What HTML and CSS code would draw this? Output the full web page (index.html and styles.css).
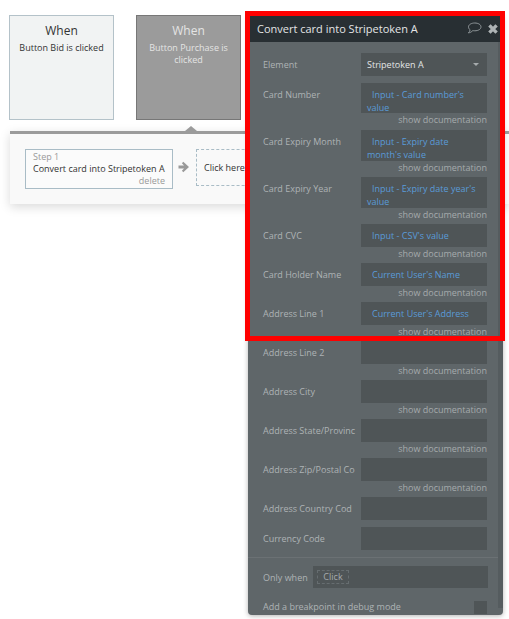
FILE: index.html
```html
<!DOCTYPE html>
<html lang="en">
<head>
    <meta charset="UTF-8">
    <meta name="viewport" content="width=device-width, initial-scale=1.0">
    <title>Workflow editor</title>
    <link rel="stylesheet" href="styles.css">
</head>
<body>
    <div class="when-row">
        <div class="when-card">
            <div class="when-title">When</div>
            <div class="when-text">Button Bid is clicked</div>
        </div>
        <div class="when-card selected">
            <div class="when-title">When</div>
            <div class="when-text">Button Purchase is clicked</div>
        </div>
    </div>

    <div class="step-panel">
        <span class="step-notch"></span>
        <div class="step-box">
            <div class="step-label">Step 1</div>
            <div class="step-name">Convert card into Stripetoken A</div>
            <div class="step-delete">delete</div>
        </div>
        <svg class="step-arrow" viewBox="0 0 12 12" width="12" height="12">
            <path d="M0.5 4.4H6L3.9 2.3L5.3 0.8L11 6L5.3 11.2L3.9 9.7L6 7.6H0.5Z" fill="#999"/>
        </svg>
        <div class="step-add">Click here to add an action...</div>
    </div>

    <div class="editor">
        <div class="editor-head">
            <span class="editor-title">Convert card into Stripetoken A</span>
            <svg class="icon-comment" viewBox="0 0 15 12" width="15" height="12">
                <path d="M7.8 1C11.2 1 14 2.6 14 4.9C14 7.2 11.2 8.8 7.8 8.8C7 8.8 6.4 8.7 5.8 8.6C4.8 9.8 3 10.7 1.4 10.9C2.4 10 3 9 3.1 7.8C2 7 1.5 6 1.5 4.9C1.5 2.6 4.4 1 7.8 1Z" fill="none" stroke="#8f9699" stroke-width="1"/>
            </svg>
            <svg class="icon-close" viewBox="0 0 10 10" width="10" height="10">
                <path d="M1.4 1.4L8.6 8.6M8.6 1.4L1.4 8.6" stroke="#aeb3b5" stroke-width="3.4"/>
            </svg>
        </div>
        <div class="editor-body">
            <span class="editor-scroll"></span>

            <div class="field first">
                <div class="field-label">Element</div>
                <div class="field-input select">Stripetoken A<span class="caret"></span></div>
            </div>

            <div class="field short">
                <div class="field-label">Card Number</div>
                <div class="field-input tall"><span class="dyn">Input - Card number's value</span></div>
            </div>
            <div class="doc gap">show documentation</div>

            <div class="field">
                <div class="field-label">Card Expiry Month</div>
                <div class="field-input tall"><span class="dyn">Input - Expiry date month's value</span></div>
            </div>
            <div class="doc">show documentation</div>

            <div class="field">
                <div class="field-label">Card Expiry Year</div>
                <div class="field-input tall"><span class="dyn">Input - Expiry date year's value</span></div>
            </div>
            <div class="doc">show documentation</div>

            <div class="field">
                <div class="field-label">Card CVC</div>
                <div class="field-input"><span class="dyn">Input - CSV's value</span></div>
            </div>
            <div class="doc">show documentation</div>

            <div class="field">
                <div class="field-label">Card Holder Name</div>
                <div class="field-input"><span class="dyn">Current User's Name</span></div>
            </div>
            <div class="doc">show documentation</div>

            <div class="field">
                <div class="field-label">Address Line 1</div>
                <div class="field-input"><span class="dyn">Current User's Address</span></div>
            </div>
            <div class="doc">show documentation</div>

            <div class="field">
                <div class="field-label">Address Line 2</div>
                <div class="field-input"></div>
            </div>
            <div class="doc">show documentation</div>

            <div class="field">
                <div class="field-label">Address City</div>
                <div class="field-input"></div>
            </div>
            <div class="doc">show documentation</div>

            <div class="field">
                <div class="field-label">Address State/Provinc</div>
                <div class="field-input"></div>
            </div>
            <div class="doc">show documentation</div>

            <div class="field">
                <div class="field-label">Address Zip/Postal Co</div>
                <div class="field-input"></div>
            </div>
            <div class="doc">show documentation</div>

            <div class="field">
                <div class="field-label">Address Country Cod</div>
                <div class="field-input"></div>
            </div>

            <div class="field next">
                <div class="field-label">Currency Code</div>
                <div class="field-input"></div>
            </div>

            <div class="condition">
                <div class="condition-label">Only when</div>
                <div class="condition-input"><span class="click-chip">Click</span></div>
            </div>

            <div class="breakpoint">
                <div class="breakpoint-label">Add a breakpoint in debug mode</div>
                <span class="breakpoint-box"></span>
            </div>
        </div>
    </div>

    <div class="highlight"></div>
</body>
</html>
```

FILE: styles.css
```css
body {
    margin: 0;
    height: 619px;
    overflow: hidden;
    position: relative;
    background: #fff;
    font-family: "Open Sans", Arial, sans-serif;
    font-size: 9px;
}

/* top cards */
.when-row {
    display: flex;
    gap: 22px;
    padding: 15px 0 0 9px;
}
.when-card {
    box-sizing: border-box;
    width: 105px;
    height: 105px;
    padding: 6px 5px;
    background: #f1f3f3;
    border: 1px solid #b4c2c9;
    color: #333;
    text-align: center;
}
.when-card.selected {
    background: #9b9b9b;
    border-color: #777;
    color: #e4e4e4;
}
.when-title {
    font-size: 12px;
    line-height: 17px;
}
.when-text {
    margin-top: 3px;
    line-height: 12px;
}

/* step strip */
.step-panel {
    position: relative;
    display: flex;
    align-items: flex-start;
    box-sizing: border-box;
    width: 499px;
    height: 73px;
    margin: 11px 0 0 10px;
    padding: 15px 0 0 15px;
    background: #f9f9f9;
    border-top: 3px solid #9b9b9b;
    box-shadow: 0 3px 10px rgba(0,0,0,0.15);
}
.step-notch {
    position: absolute;
    left: 175px;
    top: -8px;
    border: 6px solid transparent;
    border-top: 0;
    border-bottom: 5px solid #9b9b9b;
}
.step-box {
    box-sizing: border-box;
    width: 148px;
    height: 40px;
    padding: 1px 7px;
    background: #fbfbfb;
    border: 1px solid #a9bcc6;
    line-height: 12px;
    color: #333;
    white-space: nowrap;
}
.step-label {
    color: #999;
}
.step-delete {
    color: #999;
    text-align: right;
}
.step-arrow {
    margin: 12px 6px 0 5px;
}
.step-add {
    box-sizing: border-box;
    width: 150px;
    height: 37px;
    padding-left: 7px;
    border: 1px dashed #a9bcc6;
    line-height: 35px;
    color: #333;
    white-space: nowrap;
    overflow: hidden;
}

/* floating property editor */
.editor {
    position: absolute;
    left: 248px;
    top: 16px;
    width: 255px;
    height: 599px;
    border-radius: 0 0 4px 4px;
    background: #5f6669;
    box-shadow: 0 1px 5px rgba(0,0,0,0.3);
    overflow: hidden;
}
.editor-head {
    display: flex;
    align-items: center;
    box-sizing: border-box;
    height: 26px;
    padding: 0 5px 2px 9px;
    background: #282f33;
}
.editor-title {
    flex: 1;
    font-size: 11px;
    color: #e3e5e6;
}
.icon-comment {
    margin-right: 6px;
}
.icon-close {
    margin-top: 1px;
}
.editor-body {
    position: relative;
    padding-top: 11px;
}
.editor-scroll {
    position: absolute;
    right: 0;
    top: 0;
    width: 5px;
    height: 566px;
    background: #555c5f;
}
.field {
    display: flex;
    align-items: flex-start;
    padding-left: 15px;
}
.first {
    margin-bottom: 7px;
}
.next {
    margin-top: 7px;
}
.field-label {
    width: 98px;
    line-height: 23px;
    color: #aeb3b5;
    white-space: nowrap;
}
.field-input {
    box-sizing: border-box;
    width: 126px;
    height: 23px;
    padding: 5px 6px 0;
    background: #4f5557;
    line-height: 13px;
    color: #e3e5e6;
}
.field-input.tall {
    height: 31px;
}
.short .field-input.tall {
    height: 30px;
}
.dyn {
    margin-left: 5px;
    color: #5a9bd8;
}
.select {
    position: relative;
}
.caret {
    position: absolute;
    right: 8px;
    top: 10px;
    border: 3px solid transparent;
    border-top: 3px solid #a6abad;
    border-bottom: 0;
}
.doc {
    height: 16px;
    padding-right: 16px;
    line-height: 14px;
    text-align: right;
    color: #a5aaac;
}
.doc.gap {
    height: 17px;
}

/* bottom section */
.condition {
    display: flex;
    align-items: center;
    margin-top: 7px;
    padding: 8px 0 0 15px;
    border-top: 1px solid #6b7174;
}
.condition-label {
    width: 50px;
    color: #aeb3b5;
}
.condition-input {
    box-sizing: border-box;
    width: 175px;
    height: 22px;
    padding: 4px;
    background: #4f5557;
}
.click-chip {
    display: block;
    box-sizing: border-box;
    width: 32px;
    height: 14px;
    border: 1px dashed #666d70;
    line-height: 12px;
    text-align: center;
    color: #a5aaac;
}
.breakpoint {
    display: flex;
    justify-content: space-between;
    padding: 13px 16px 0 15px;
    color: #aeb3b5;
}
.breakpoint-label {
    margin-top: -1px;
}
.breakpoint-box {
    width: 13px;
    height: 13px;
    background: #4f5557;
}

/* red annotation from the screenshot */
.highlight {
    position: absolute;
    left: 245px;
    top: 11px;
    width: 250px;
    height: 320px;
    border: 5px solid #f00;
}
```
